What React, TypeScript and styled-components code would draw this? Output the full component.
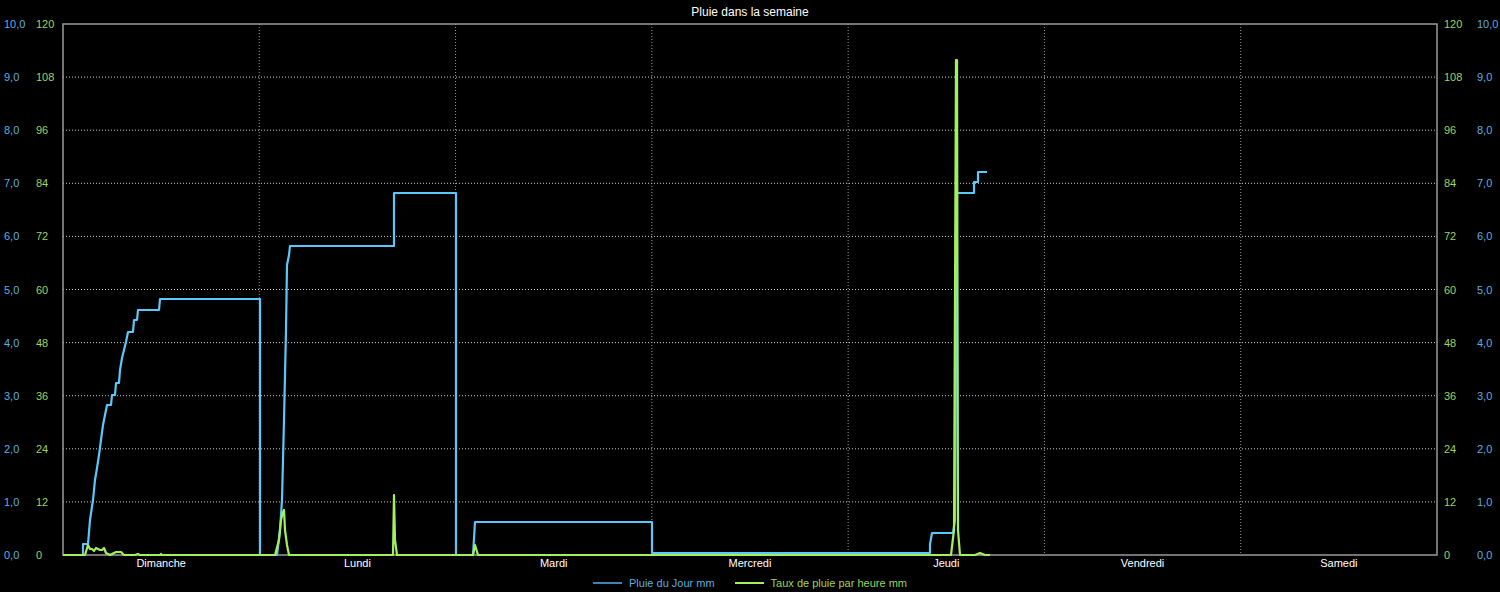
import React from 'react';
import styled, { createGlobalStyle } from 'styled-components';

const GlobalStyle = createGlobalStyle`
  html, body { margin: 0; padding: 0; background: #000; }
  body { font-family: 'Liberation Sans', Arial, sans-serif; }
`;

const blue = '#5ac8fa';
const green = '#a4f05c';
const blueText = '#5aaee0';
const greenText = '#9ed35a';

const Page = styled.div({
  width: '1500px',
  height: '592px',
  background: '#000',
  display: 'flex',
  flexDirection: 'column',
  overflow: 'hidden',
});

const Title = styled.div({
  height: '19px',
  paddingTop: '5px',
  boxSizing: 'border-box',
  lineHeight: '14px',
  textAlign: 'center',
  color: '#fff',
  fontSize: '12px',
});

const Legend = styled.div({
  display: 'flex',
  justifyContent: 'center',
  alignItems: 'center',
  gap: '20px',
  height: '18px',
  fontSize: '11px',
});

const LegendItem = styled.div<{ $color: string; $swatch: string }>(p => ({
  display: 'flex',
  alignItems: 'center',
  gap: '7px',
  color: p.$color,
  '&::before': {
    content: '""',
    width: '29px',
    height: '2px',
    background: p.$swatch,
  },
}));

// plot box in page coordinates
const X0 = 63;
const X1 = 1437;
const Y0 = 24;
const Y1 = 555;
const H = Y1 - Y0;
const TOP = 19;
const days = ['Dimanche', 'Lundi', 'Mardi', 'Mercredi', 'Jeudi', 'Vendredi', 'Samedi'];
const dayW = (X1 - X0) / 7;

const bluePts: [number, number][] = [
  [63, 555], [83, 555], [83, 544], [88, 544], [90, 520], [93, 500], [95, 480], [97, 468],
  [99, 455], [101, 440], [103, 425], [105, 415], [107, 405], [111, 405], [112, 395], [115, 395],
  [116, 383], [119, 383], [120, 370], [122, 358], [124, 350], [126, 342], [128, 332], [133, 332],
  [134, 320], [137, 320], [138, 310], [159, 310], [160, 299], [260, 299], [260, 555], [277, 555],
  [280, 530], [282, 500], [284, 420], [286, 330], [287, 265], [289, 255], [290, 246], [394, 246],
  [394, 193], [456, 193], [456, 555], [473, 555], [475, 522], [652, 522], [652, 553], [930, 553],
  [930, 544], [932, 533], [953, 533], [955, 520], [957, 193], [974, 193], [974, 182], [978, 182],
  [978, 172], [987, 172],
];

const greenPts: [number, number][] = [
  [63, 555], [85, 555], [88, 545], [90, 549], [92, 549], [94, 551], [96, 548], [100, 550],
  [102, 550], [104, 548], [106, 553], [110, 555], [116, 552], [121, 552], [124, 555], [135, 555],
  [138, 554], [140, 555], [160, 555], [161, 554], [162, 555], [275, 555], [279, 540], [281, 520],
  [283, 512], [284, 510], [285, 530], [287, 545], [289, 555], [393, 555], [394, 495], [395, 540],
  [397, 555], [473, 555], [475, 545], [478, 555], [951, 555], [954, 530], [956, 60], [957, 60],
  [958, 530], [960, 555], [975, 555], [980, 553], [985, 555], [990, 555],
];

const toPath = (pts: [number, number][]) =>
  pts.map(([x, y], i) => `${i ? 'L' : 'M'}${x} ${y}`).join(' ');

function RainChart() {
  const ticks = Array.from({ length: 11 }, (_, i) => i);
  return (
    <svg width={1500} height={555} viewBox={`0 ${TOP} 1500 555`}>
      {ticks.slice(1, 10).map(i => {
        const y = Y1 - (i * H) / 10;
        return <line key={i} x1={X0} x2={X1} y1={y} y2={y} stroke="#ccc" strokeWidth={1} strokeDasharray="1 2" />;
      })}
      {days.slice(1).map((_, i) => {
        const x = X0 + dayW * (i + 1);
        return <line key={i} x1={x} x2={x} y1={Y0} y2={Y1} stroke="#999" strokeWidth={1} strokeDasharray="1 2" />;
      })}
      <rect x={X0} y={Y0} width={X1 - X0} height={H} fill="none" stroke="#9a9a9a" strokeWidth={1.5} />
      {ticks.map(i => {
        const y = Y1 - (i * H) / 10 + 4;
        const mm = `${i},0`;
        const rate = `${i * 12}`;
        return (
          <g key={i} fontSize={11} fontFamily="'Liberation Sans', Arial, sans-serif">
            <text x={4} y={y} fill={blueText}>{mm}</text>
            <text x={36} y={y} fill={greenText}>{rate}</text>
            <text x={1444} y={y} fill={greenText}>{rate}</text>
            <text x={1477} y={y} fill={blueText}>{mm}</text>
          </g>
        );
      })}
      {days.map((d, i) => (
        <text
          key={d}
          x={X0 + dayW * (i + 0.5)}
          y={Y1 + 12}
          fill="#fff"
          fontSize={11}
          textAnchor="middle"
          fontFamily="'Liberation Sans', Arial, sans-serif"
        >
          {d}
        </text>
      ))}
      <path d={toPath(bluePts)} fill="none" stroke={blue} strokeWidth={2.2} strokeLinejoin="round" />
      <path d={toPath(greenPts)} fill="none" stroke={green} strokeWidth={2.2} strokeLinejoin="round" />
    </svg>
  );
}

export default function App() {
  return (
    <Page>
      <GlobalStyle />
      <Title>Pluie dans la semaine</Title>
      <RainChart />
      <Legend>
        <LegendItem $color={blueText} $swatch="#3a86b0">Pluie du Jour mm</LegendItem>
        <LegendItem $color={greenText} $swatch={green}>Taux de pluie par heure mm</LegendItem>
      </Legend>
    </Page>
  );
}
